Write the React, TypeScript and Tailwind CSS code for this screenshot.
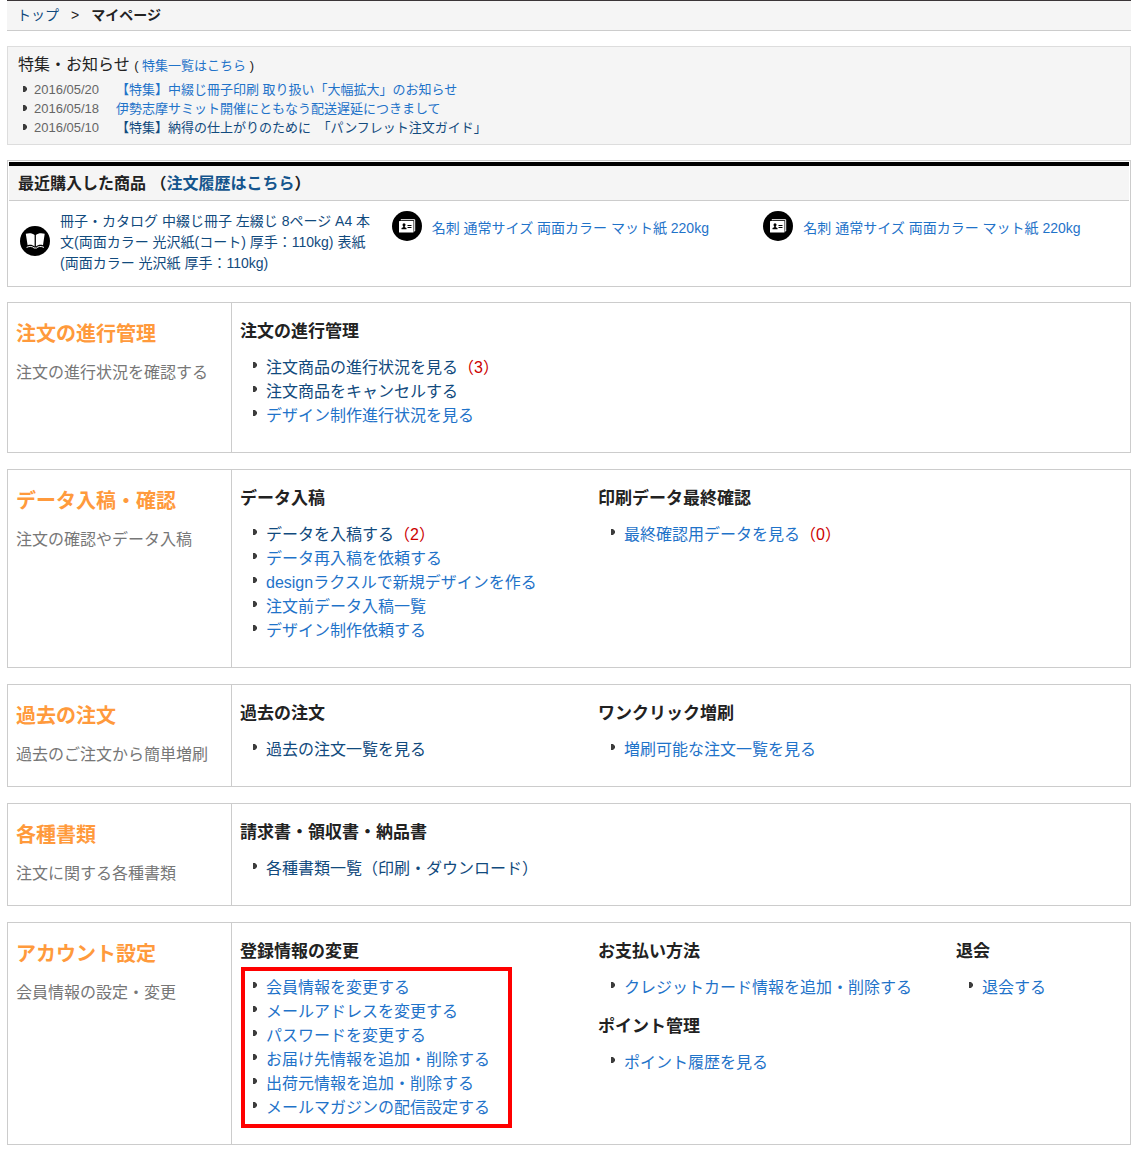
import React from 'react';
import clsx from 'clsx';

type LinkItem = {
  label: string;
  visited?: boolean;
  count?: number;
};

type LinkGroup = {
  title: string;
  links: LinkItem[];
  highlighted?: boolean;
};

type Section = {
  title: string;
  description: string;
  columns: LinkGroup[][];
};

const NEWS = [
  { date: '2016/05/20', label: '【特集】中綴じ冊子印刷 取り扱い「大幅拡大」のお知らせ', visited: false },
  { date: '2016/05/18', label: '伊勢志摩サミット開催にともなう配送遅延につきまして', visited: false },
  { date: '2016/05/10', label: '【特集】納得の仕上がりのために　「パンフレット注文ガイド」', visited: true },
];

const PRODUCTS = [
  {
    icon: 'book',
    label: '冊子・カタログ 中綴じ冊子 左綴じ 8ページ A4 本文(両面カラー 光沢紙(コート) 厚手：110kg) 表紙(両面カラー 光沢紙 厚手：110kg)',
    visited: true,
  },
  { icon: 'card', label: '名刺 通常サイズ 両面カラー マット紙 220kg', visited: false },
  { icon: 'card', label: '名刺 通常サイズ 両面カラー マット紙 220kg', visited: false },
];

const SECTIONS: Section[] = [
  {
    title: '注文の進行管理',
    description: '注文の進行状況を確認する',
    columns: [
      [
        {
          title: '注文の進行管理',
          links: [
            { label: '注文商品の進行状況を見る', visited: true, count: 3 },
            { label: '注文商品をキャンセルする', visited: true },
            { label: 'デザイン制作進行状況を見る' },
          ],
        },
      ],
    ],
  },
  {
    title: 'データ入稿・確認',
    description: '注文の確認やデータ入稿',
    columns: [
      [
        {
          title: 'データ入稿',
          links: [
            { label: 'データを入稿する', visited: true, count: 2 },
            { label: 'データ再入稿を依頼する' },
            { label: 'designラクスルで新規デザインを作る' },
            { label: '注文前データ入稿一覧' },
            { label: 'デザイン制作依頼する' },
          ],
        },
      ],
      [{ title: '印刷データ最終確認', links: [{ label: '最終確認用データを見る', count: 0 }] }],
    ],
  },
  {
    title: '過去の注文',
    description: '過去のご注文から簡単増刷',
    columns: [
      [{ title: '過去の注文', links: [{ label: '過去の注文一覧を見る', visited: true }] }],
      [{ title: 'ワンクリック増刷', links: [{ label: '増刷可能な注文一覧を見る' }] }],
    ],
  },
  {
    title: '各種書類',
    description: '注文に関する各種書類',
    columns: [
      [{ title: '請求書・領収書・納品書', links: [{ label: '各種書類一覧（印刷・ダウンロード）', visited: true }] }],
    ],
  },
  {
    title: 'アカウント設定',
    description: '会員情報の設定・変更',
    columns: [
      [
        {
          title: '登録情報の変更',
          highlighted: true,
          links: [
            { label: '会員情報を変更する' },
            { label: 'メールアドレスを変更する' },
            { label: 'パスワードを変更する' },
            { label: 'お届け先情報を追加・削除する' },
            { label: '出荷元情報を追加・削除する' },
            { label: 'メールマガジンの配信設定する' },
          ],
        },
      ],
      [
        { title: 'お支払い方法', links: [{ label: 'クレジットカード情報を追加・削除する' }] },
        { title: 'ポイント管理', links: [{ label: 'ポイント履歴を見る' }] },
      ],
      [{ title: '退会', links: [{ label: '退会する' }] }],
    ],
  },
];

const linkColor = (visited?: boolean) => (visited ? 'text-[#114a7d]' : 'text-[#1f73c9]');

function Bullet({ className }: { className?: string }) {
  return (
    <svg className={clsx('h-[6px] w-[4px] shrink-0', className)} viewBox="0 0 4 6" aria-hidden="true">
      <path d="M0 0H2L4 2V4L2 6H0Z" fill="#3c3c3c" />
    </svg>
  );
}

function BookIcon() {
  return (
    <svg className="mb-1 h-[30px] w-[30px] shrink-0" viewBox="0 0 30 30" aria-hidden="true">
      <circle cx="15" cy="15" r="15" fill="#000" />
      <path d="M5.8 7.8C9 6.8 12.5 7 14.6 9V20.6C12.5 18.6 10 18.4 7.6 19.2Z" fill="#fff" />
      <path d="M24.7 7.8C21.6 6.8 18 7 15.9 9V20.6C18 18.6 20.6 18.4 23 19.2Z" fill="#fff" />
      <path d="M6.6 21.4C9.5 20 12.5 20.2 14 22H16.6C18 20.2 21 20 24 21.4" fill="none" stroke="#fff" strokeWidth="1" />
    </svg>
  );
}

function CardIcon() {
  return (
    <svg className="mb-1 h-[30px] w-[30px] shrink-0" viewBox="0 0 30 30" aria-hidden="true">
      <circle cx="15" cy="15" r="15" fill="#000" />
      <path d="M9 9.2V8.7H22.7V20H21.8" fill="none" stroke="#fff" strokeWidth="1" />
      <rect x="7" y="10" width="14.5" height="11.5" rx="0.5" fill="#fff" />
      <circle cx="12" cy="13.8" r="1.5" fill="#000" />
      <path d="M11.2 15H12.8V16.2L14.5 17V18.2H9.5V17L11.2 16.2Z" fill="#000" />
      <path d="M15.5 14.5H19.5M15.5 16.5H19.5" stroke="#000" strokeWidth="1" />
    </svg>
  );
}

function Group({ group }: { group: LinkGroup }) {
  return (
    <div>
      <h3 className="mb-3 text-[17px] leading-6 font-bold text-[#222]">{group.title}</h3>
      <ul className="relative w-fit">
        {group.links.map(link => (
          <li key={link.label} className="flex items-center gap-[9px] pl-[13px] text-base leading-6">
            <Bullet className="mb-[6px]" />
            <span>
              <a href="#" className={clsx('hover:underline', linkColor(link.visited))}>{link.label}</a>
              {link.count !== undefined && <span className="text-[#c00]">（{link.count}）</span>}
            </span>
          </li>
        ))}
        {group.highlighted && (
          <li className="pointer-events-none absolute -top-[9px] -right-[22px] -bottom-2 left-px border-4 border-[#f00]" aria-hidden="true" />
        )}
      </ul>
    </div>
  );
}

function App() {
  return (
    <div className="bg-white px-[7px] pb-2 font-['Liberation_Sans','Noto_Sans_CJK_JP',sans-serif] text-[#222]" lang="ja">
      <nav className="flex h-[31px] items-center gap-3 border-t border-b border-t-[#3b3638] border-b-[#ccc] bg-[#f5f5f5] px-[10px] pb-0.5 text-sm">
        <a href="#" className="text-[#114a7d]">トップ</a>
        <span>&gt;</span>
        <strong>マイページ</strong>
      </nav>

      {/* News */}
      <section className="mt-[15px] border border-[#ddd] bg-[#f5f5f5] px-[10px] pt-[6px] pb-[7px]">
        <h2 className="text-base leading-6">
          特集・お知らせ <span className="text-[13px]">( <a href="#" className="text-[#1f73c9]">特集一覧はこちら</a> )</span>
        </h2>
        <ul className="pt-[2px]">
          {NEWS.map(item => (
            <li key={item.date} className="flex items-center pl-[5px] text-[13px] leading-[19px]">
              <Bullet className="mb-px" />
              <time className="ml-[7px] w-[82px] text-[#666]">{item.date}</time>
              <a href="#" className={clsx('hover:underline', linkColor(item.visited))}>{item.label}</a>
            </li>
          ))}
        </ul>
      </section>

      {/* Recently bought products */}
      <section className="mt-[15px] border border-[#ccc] p-px">
        <h2 className="border-t-4 border-b border-t-black border-b-[#ccc] bg-[#f5f5f5] px-[9px] pt-[6px] pb-1 text-base leading-6 font-bold">
          最近購入した商品 （<a href="#" className="text-[#15558d]">注文履歴はこちら</a>）
        </h2>
        <ul className="grid grid-cols-3 items-start pt-[10px] pb-[11px] pl-[5px]">
          {PRODUCTS.map((product, i) => (
            <li key={i} className="flex items-center gap-[10px] pr-[10px] pl-[6px]">
              {product.icon === 'book' ? <BookIcon /> : <CardIcon />}
              <a href="#" className={clsx('text-sm leading-[21px] hover:underline', linkColor(product.visited))}>{product.label}</a>
            </li>
          ))}
        </ul>
      </section>

      {/* Account menu */}
      <main className="mt-[15px] flex flex-col gap-4">
        {SECTIONS.map(section => (
          <section key={section.title} className="flex border border-[#ccc]">
            <div className="w-[224px] shrink-0 border-r border-[#ccc] pt-[17px] pl-2">
              <h2 className="mb-[13px] text-xl leading-7 font-bold text-[#ff9a3c]">{section.title}</h2>
              <p className="text-base leading-6 text-[#777]">{section.description}</p>
            </div>
            <div className="grid flex-1 grid-cols-[2fr_2fr_1fr] pt-[17px] pr-[3px] pb-6">
              {section.columns.map((groups, i) => (
                <div key={i} className="flex flex-col gap-[15px] pl-2">
                  {groups.map(group => <Group key={group.title} group={group} />)}
                </div>
              ))}
            </div>
          </section>
        ))}
      </main>
    </div>
  );
}

export default App;
